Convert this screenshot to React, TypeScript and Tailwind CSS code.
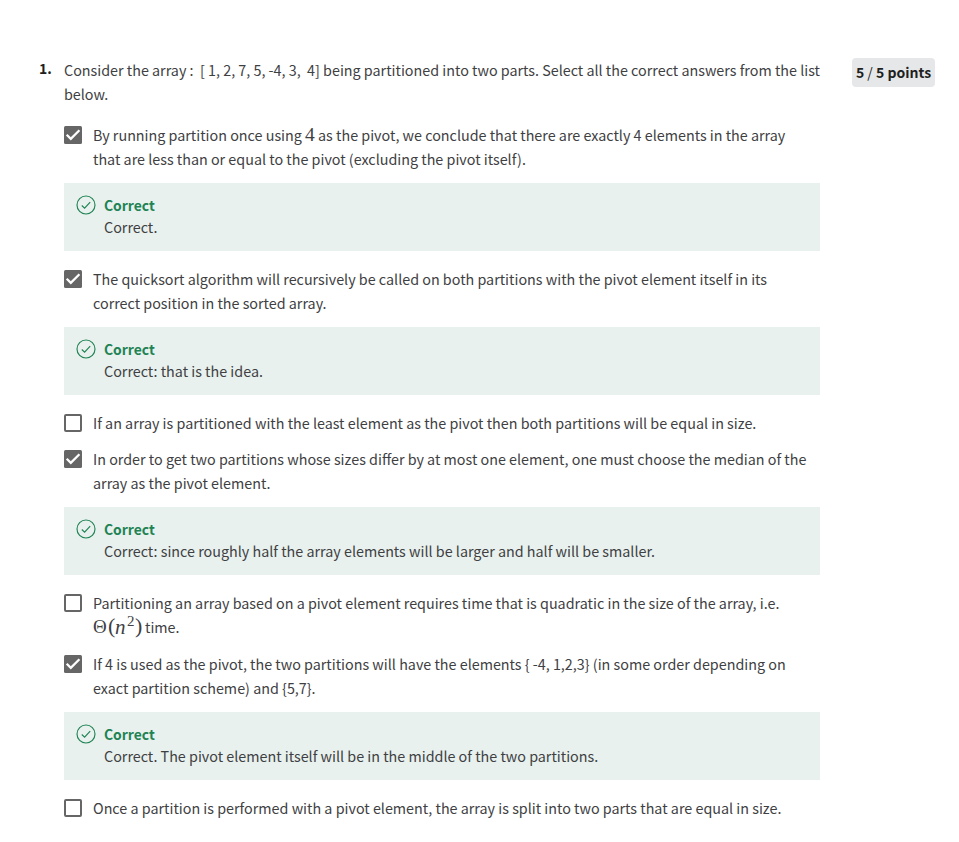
import type { ReactNode } from "react";

function Line({ children }: { children: ReactNode }) {
  return <span className="block h-6 whitespace-nowrap">{children}</span>;
}

function Check({ on }: { on: boolean }) {
  return on ? (
    <svg viewBox="0 0 18 18" className="mt-[3px] h-[18px] w-[18px] shrink-0">
      <rect width="18" height="18" rx="1.5" fill="#666" />
      <path d="M2.7 8.8 L6.8 12.8 L15.4 4.3" fill="none" stroke="#fff" strokeWidth="2.3" />
    </svg>
  ) : (
    <span className="mt-[3px] h-[18px] w-[18px] shrink-0 rounded-[2px] border-2 border-[#666]" />
  );
}

function Theta() {
  return (
    <span className="inline-flex h-[25px] items-center font-['Liberation_Serif',serif] text-[19px] leading-6">
      <span className="w-[15px] pb-0.5 text-[19px]">Θ</span>
      <span className="w-[7px] pb-[3px] text-[22px]">(</span>
      <i className="w-[12px] pb-0.5 text-[21px]">n</i>
      <span className="w-[8px] pb-[13px] text-[15px]">2</span>
      <span className="w-[7px] pb-[3px] text-[22px]">)</span>
    </span>
  );
}

const options: { on: boolean; lines: ReactNode[]; note?: string }[] = [
  {
    on: true,
    lines: [
      <>By running partition once using <span className="font-['Liberation_Serif',serif] text-[19.5px] leading-none">4</span> as the pivot, we conclude that there are exactly 4 elements in the array</>,
      "that are less than or equal to the pivot (excluding the pivot itself).",
    ],
    note: "Correct.",
  },
  {
    on: true,
    lines: ["The quicksort algorithm will recursively be called on both partitions with the pivot element itself in its", "correct position in the sorted array."],
    note: "Correct: that is the idea.",
  },
  { on: false, lines: ["If an array is partitioned with the least element as the pivot then both partitions will be equal in size."] },
  {
    on: true,
    lines: ["In order to get two partitions whose sizes differ by at most one element, one must choose the median of the", "array as the pivot element."],
    note: "Correct: since roughly half the array elements will be larger and half will be smaller.",
  },
  {
    on: false,
    lines: [
      "Partitioning an array based on a pivot element requires time that is quadratic in the size of the array, i.e.",
      <span className="flex h-[25px]"><Theta /><span className="ml-[3px]">time.</span></span>,
    ],
  },
  {
    on: true,
    lines: ["If 4 is used as the pivot, the two partitions will have the elements { -4, 1,2,3} (in some order depending on", "exact partition scheme) and {5,7}."],
    note: "Correct. The pivot element itself will be in the middle of the two partitions.",
  },
  { on: false, lines: ["Once a partition is performed with a pivot element, the array is split into two parts that are equal in size."] },
];

export default function App() {
  return (
    <main className="flex h-[842px] w-[959px] items-start overflow-hidden bg-white pt-[58px] pl-[39px] font-['Noto_Sans_CJK_SC',sans-serif] text-[14.33px] leading-6 text-[#3e4042]">
      <div className="-mt-0.5 w-[25px] shrink-0 text-[14px] font-bold text-[#1f1f1f]">1.</div>
      <div className="w-[756px] shrink-0">
        <Line>Consider the array :&nbsp; [ 1, 2, 7, 5, -4, 3,&nbsp; 4] being partitioned into two parts. Select all the correct answers from the list</Line>
        <Line>below.</Line>
        <div className="h-[17px]" />
        {options.map((o, i) => (
          <section key={i} className={o.note ? "mb-4" : i === 4 ? "mb-[13px]" : "mb-3"}>
            <div className="flex gap-[11px]">
              <Check on={o.on} />
              <div>{o.lines.map((l, j) => <Line key={j}>{l}</Line>)}</div>
            </div>
            {o.note && (
              <div className="mt-3 flex h-[68px] bg-[#e8f1ee] pt-[11px] pl-3">
                <svg viewBox="0 0 20 20" className="mt-px h-5 w-5 shrink-0" fill="none" stroke="#1f8354" strokeWidth="1.15">
                  <circle cx="10" cy="10" r="9" />
                  <path d="M5.8 10.5 L8.6 13.1 L14.2 7.1" />
                </svg>
                <div className="ml-2 leading-[22px]">
                  <p className="text-[13.9px] font-bold text-[#1f8354]">Correct</p>
                  <Line>{o.note}</Line>
                </div>
              </div>
            )}
          </section>
        ))}
      </div>
      <div className="ml-8 h-[29px] w-[83px] rounded bg-[#e5e7e8] text-center text-[14px] font-bold leading-[29px] whitespace-nowrap text-[#1f1f1f]">
        5 <span className="font-normal">/</span> 5 points
      </div>
    </main>
  );
}
